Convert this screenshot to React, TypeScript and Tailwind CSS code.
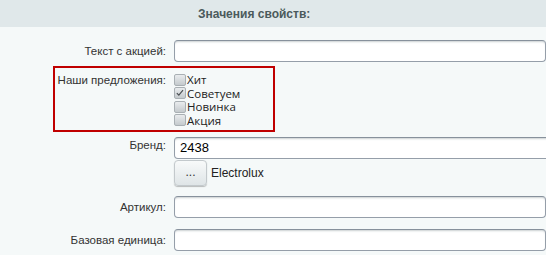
import React from "react"

const font = { fontFamily: '"Liberation Sans", Arial, sans-serif' }

function TextInput({ value }: { value?: string }) {
  return (
    <div className="h-[22px] w-[420px] rounded-[4px] border border-[#959ea9] border-t-[#87919c] bg-white shadow-[inset_0_2px_2px_-1px_rgba(180,188,191,0.7)] px-[5px] text-[13px] leading-[20px] text-[#000]">
      {value}
    </div>
  )
}

function Check({ label, checked }: { label: string; checked?: boolean }) {
  return (
    <div className="flex h-[13.5px] items-center">
      <div className="relative h-[12px] w-[12px] rounded-[2px] border border-[#a9b0b4] bg-gradient-to-b from-[#e9ecee] to-[#c4cacd]">
        {checked && (
          <svg viewBox="0 0 12 12" className="absolute left-0 top-0 h-[10px] w-[10px]">
            <path d="M2.2 6.2 L4.6 8.6 L9.6 2.6" fill="none" stroke="#4a4f52" strokeWidth="1.4" />
          </svg>
        )}
      </div>
      <span
        className="ml-px text-[11.5px] leading-[13px] text-[#222]"
        style={{ fontFamily: '"Open Sans", "Noto Sans", sans-serif' }}
      >
        {label}
      </span>
    </div>
  )
}

function Label({ children, className = "" }: { children: React.ReactNode; className?: string }) {
  return (
    <div className={`w-[174px] shrink-0 pr-[8px] text-right text-[11.5px] text-[#333] ${className}`}>
      {children}
    </div>
  )
}

export default function App() {
  return (
    <div className="h-[255px] w-[546px] overflow-hidden bg-[#f5f9f9]" style={font}>
      {/* Header */}
      <div className="flex h-[27px] items-center bg-[#e0e8ea] pl-[198px]">
        <span className="text-[12px] font-bold text-[#4b5a5c]">Значения свойств:</span>
      </div>

      <div className="flex flex-col pt-[13px]">
        {/* Текст с акцией */}
        <div className="flex items-center">
          <Label className="leading-[22px]">Текст с акцией:</Label>
          <TextInput />
        </div>

        {/* Наши предложения */}
        <div className="relative mt-[4px] flex h-[66px] pt-[7px]">
          <div className="pointer-events-none absolute left-[53px] top-0 h-[66px] w-[222px] border-2 border-[#c00000]" />
          <Label className="leading-[13px] pt-px">Наши предложения:</Label>
          <div className="flex flex-col">
            <Check label="Хит" />
            <Check label="Советуем" checked />
            <Check label="Новинка" />
            <Check label="Акция" />
          </div>
        </div>

        {/* Бренд */}
        <div className="mt-[5px] flex">
          <Label className="leading-[14px] pt-px">Бренд:</Label>
          <div className="flex flex-col">
            <TextInput value="2438" />
            <div className="mt-px flex items-center">
              <div className="flex h-[26px] w-[33px] items-center justify-center rounded-[4px] border border-[#c3c9cc] bg-gradient-to-b from-[#f8fafa] to-[#dfe5e7] pb-[3px] text-[12px] text-[#333] shadow-[0_1px_1px_rgba(0,0,0,0.25)]">
                ...
              </div>
              <span className="ml-[4px] text-[12px] text-[#222]">Electrolux</span>
            </div>
          </div>
        </div>

        {/* Артикул */}
        <div className="mt-[10px] flex items-center">
          <Label className="leading-[22px]">Артикул:</Label>
          <TextInput />
        </div>

        {/* Базовая единица */}
        <div className="mt-[11px] flex items-center">
          <Label className="leading-[22px]">Базовая единица:</Label>
          <TextInput />
        </div>
      </div>
    </div>
  )
}
